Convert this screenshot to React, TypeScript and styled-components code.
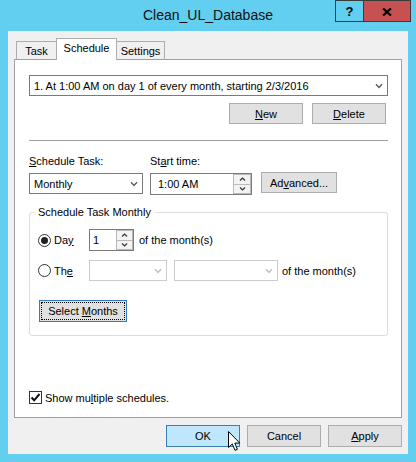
import React from "react";
import styled, { createGlobalStyle } from "styled-components";

const Global = createGlobalStyle`
  html, body { margin: 0; padding: 0; }
  body {
    width: 416px; height: 462px; overflow: hidden;
    font-family: "Liberation Sans", Arial, sans-serif;
    font-size: 11px; color: #000;
  }
  * { box-sizing: border-box; }
`;

const Window = styled.div`
  position: relative;
  width: 416px;
  height: 462px;
  background: #62cef0;
  display: flex;
  flex-direction: column;
`;

const TitleBar = styled.div`
  height: 31px;
  flex: 0 0 31px;
  display: grid;
  grid-template-columns: 1fr auto 1fr;
  align-items: start;
`;

const Title = styled.div`
  grid-column: 2;
  font-size: 14px;
  line-height: 31px;
  color: #111;
  white-space: nowrap;
`;

const CaptionButtons = styled.div`
  grid-column: 3;
  justify-self: end;
  display: flex;
  margin-right: 5px;
`;

const CaptionButton = styled.div<{ $w: number; $bg: string; $first?: boolean }>`
  width: ${(p) => p.$w}px;
  height: 22px;
  background: ${(p) => p.$bg};
  border: 1px solid #3a3a3a;
  border-left: ${(p) => (p.$first ? "1px solid #3a3a3a" : "none")};
  display: flex;
  align-items: center;
  justify-content: center;
  font-weight: bold;
  font-size: 13px;
  color: #000;
  padding-top: 1px;
`;

const Client = styled.div`
  flex: 1;
  margin: 0 8px 8px;
  background: #f0f0f0;
  padding: 7px 6px 7px 6px;
  display: flex;
  flex-direction: column;
`;

const TabRow = styled.div`
  height: 21px;
  flex: 0 0 21px;
  display: flex;
  align-items: flex-end;
  padding-left: 2px;
  position: relative;
  z-index: 1;
`;

const Tab = styled.div<{ $w: number; $active?: boolean; $overlap?: boolean }>`
  width: ${(p) => p.$w}px;
  height: ${(p) => (p.$active ? 22 : 18)}px;
  margin-bottom: ${(p) => (p.$active ? -1 : 0)}px;
  margin-left: ${(p) => (p.$overlap ? -1 : 0)}px;
  background: ${(p) => (p.$active ? "#fff" : "#f0f0f0")};
  border: 1px solid #adadad;
  border-bottom: none;
  position: relative;
  z-index: ${(p) => (p.$active ? 2 : 1)};
  display: flex;
  justify-content: center;
  align-items: center;
  padding-bottom: ${(p) => (p.$active ? 3 : 0)}px;
  line-height: 14px;
`;

const Panel = styled.div`
  flex: 0 0 359px;
  background: #fff;
  border: 1px solid #a0a0a0;
  padding: 15px 13px 13px 14px;
  display: flex;
  flex-direction: column;
`;

const ComboBox = styled.div<{ $w?: number; $h?: number; $disabled?: boolean }>`
  width: ${(p) => (p.$w ? `${p.$w}px` : "100%")};
  height: ${(p) => p.$h ?? 21}px;
  border: 1px solid ${(p) => (p.$disabled ? "#cccccc" : "#7a7a7a")};
  background: #fff;
  display: flex;
  align-items: center;
  justify-content: space-between;
  padding: 0 4px 0 4px;
  white-space: nowrap;
`;

const Chevron = ({ color = "#606060" }: { color?: string }) => (
  <svg width="8" height="6" viewBox="0 0 8 6" style={{ flex: "0 0 auto" }}>
    <path d="M1 1.2 L4 4.4 L7 1.2" fill="none" stroke={color} strokeWidth="1.5" />
  </svg>
);

const ButtonRow = styled.div<{ $gap: number; $mt: number; $pr?: number }>`
  display: flex;
  justify-content: flex-end;
  gap: ${(p) => p.$gap}px;
  margin-top: ${(p) => p.$mt}px;
  padding-right: ${(p) => p.$pr ?? 0}px;
`;

const Button = styled.div<{ $w: number; $h?: number; $variant?: "hover" | "focus" }>`
  width: ${(p) => p.$w}px;
  height: ${(p) => p.$h ?? 21}px;
  background: ${(p) => (p.$variant === "hover" ? "#bee6fd" : "#e1e1e1")};
  border: 1px solid
    ${(p) => (p.$variant === "hover" ? "#3c7fb1" : p.$variant === "focus" ? "#3178c6" : "#adadad")};
  display: flex;
  align-items: center;
  justify-content: center;
  position: relative;
  white-space: nowrap;
  padding: ${(p) => (p.$variant === "focus" ? "1px" : "0")};
`;

const FocusRing = styled.div`
  width: 100%;
  height: 100%;
  border: 1px dotted #000;
  display: flex;
  align-items: center;
  justify-content: center;
`;

const Key = styled.span`
  text-decoration: underline;
`;

const Separator = styled.div`
  height: 1px;
  background: #a0a0a0;
  margin-top: 16px;
`;

const ScheduleGrid = styled.div`
  display: grid;
  grid-template-columns: 114px 102px auto;
  column-gap: 7px;
  row-gap: 4px;
  margin-top: 12px;
  align-items: start;
`;

const FieldLabel = styled.div`
  line-height: 16px;
  white-space: nowrap;
`;

const Spinner = styled.div<{ $w: number; $h: number; $pl: number }>`
  width: ${(p) => p.$w}px;
  height: ${(p) => p.$h}px;
  border: 1px solid #7a7a7a;
  background: #fff;
  display: flex;
  align-items: stretch;
`;

const SpinText = styled.div<{ $pl: number }>`
  flex: 1;
  display: flex;
  align-items: center;
  padding-left: ${(p) => p.$pl}px;
`;

const SpinButtons = styled.div<{ $w: number }>`
  width: ${(p) => p.$w}px;
  display: flex;
  flex-direction: column;
`;

const SpinButton = styled.div`
  flex: 1;
  border: 1px solid #b9b9b9;
  background: #f4f4f4;
  display: flex;
  align-items: center;
  justify-content: center;
  & + & {
    border-top: none;
  }
`;

const Arrow = ({ up }: { up?: boolean }) => (
  <svg width="7" height="4" viewBox="0 0 7 4">
    <path
      d={up ? "M1 3.5 L3.5 1 L6 3.5" : "M1 0.5 L3.5 3 L6 0.5"}
      fill="none"
      stroke="#333"
      strokeWidth="1.2"
    />
  </svg>
);

const AdvancedButton = styled(Button)`
  margin-left: 2px;
  margin-top: -1px;
`;

const Group = styled.div`
  margin-top: 17px;
  border: 1px solid #dcdcdc;
  border-radius: 3px;
  padding: 0 8px 13px 8px;
  display: flex;
  flex-direction: column;
`;

const GroupTitle = styled.div`
  align-self: flex-start;
  margin: -9px 0 0 -4px;
  padding: 0 4px;
  background: #fff;
  line-height: 16px;
`;

const OptionRow = styled.div<{ $mt: number; $h: number }>`
  display: flex;
  align-items: center;
  height: ${(p) => p.$h}px;
  margin-top: ${(p) => p.$mt}px;
  white-space: nowrap;
`;

const RadioCell = styled.div`
  width: 51px;
  display: flex;
  align-items: center;
  gap: 3px;
`;

const Radio = styled.div<{ $checked?: boolean }>`
  width: 13px;
  height: 13px;
  border-radius: 50%;
  border: 1px solid #333;
  background: #fff;
  display: flex;
  align-items: center;
  justify-content: center;
  &::after {
    content: "";
    display: ${(p) => (p.$checked ? "block" : "none")};
    width: 7px;
    height: 7px;
    border-radius: 50%;
    background: #222;
  }
`;

const After = styled.span<{ $ml: number }>`
  margin-left: ${(p) => p.$ml}px;
`;

const SelectMonths = styled(Button)`
  margin-top: 19px;
  margin-left: 1px;
`;

const CheckRow = styled.div`
  margin-top: auto;
  display: flex;
  align-items: center;
  gap: 3px;
  height: 13px;
  white-space: nowrap;
`;

const CheckBox = styled.div`
  width: 13px;
  height: 13px;
  border: 1px solid #333;
  background: #fff;
  display: flex;
  align-items: center;
  justify-content: center;
`;

const Cursor = styled.svg`
  position: absolute;
  left: 228px;
  top: 431px;
`;

export default function App() {
  return (
    <>
      <Global />
      <Window>
        <TitleBar>
          <Title>Clean_UL_Database</Title>
          <CaptionButtons>
            <CaptionButton $w={29} $bg="#62cef0" $first>
              ?
            </CaptionButton>
            <CaptionButton $w={47} $bg="#c75050">
              <svg width="10" height="8" viewBox="0 0 10 8">
                <path d="M1 0.5 L9 7.5 M9 0.5 L1 7.5" stroke="#000" strokeWidth="2.2" />
              </svg>
            </CaptionButton>
          </CaptionButtons>
        </TitleBar>
        <Client>
          <TabRow>
            <Tab $w={41}>Task</Tab>
            <Tab $w={61} $active $overlap>
              Schedule
            </Tab>
            <Tab $w={49} $overlap>
              Settings
            </Tab>
          </TabRow>
          <Panel>
            <ComboBox>
              <span>1. At 1:00 AM on day 1 of every month, starting 2/3/2016</span>
              <Chevron />
            </ComboBox>
            <ButtonRow $gap={9} $mt={7} $pr={2}>
              <Button $w={74}>
                <Key>N</Key>ew
              </Button>
              <Button $w={74}>
                <Key>D</Key>elete
              </Button>
            </ButtonRow>
            <Separator />
            <ScheduleGrid>
              <FieldLabel>
                <Key>S</Key>chedule Task:
              </FieldLabel>
              <FieldLabel>
                St<Key>a</Key>rt time:
              </FieldLabel>
              <div />
              <ComboBox $w={114}>
                <span>Monthly</span>
                <Chevron />
              </ComboBox>
              <Spinner $w={102} $h={22} $pl={7}>
                <SpinText $pl={7}>1:00 AM</SpinText>
                <SpinButtons $w={18}>
                  <SpinButton>
                    <Arrow up />
                  </SpinButton>
                  <SpinButton>
                    <Arrow />
                  </SpinButton>
                </SpinButtons>
              </Spinner>
              <AdvancedButton $w={76}>
                Ad<Key>v</Key>anced...
              </AdvancedButton>
            </ScheduleGrid>
            <Group>
              <GroupTitle>Schedule Task Monthly</GroupTitle>
              <OptionRow $mt={9} $h={22}>
                <RadioCell>
                  <Radio $checked />
                  <span>
                    Da<Key>y</Key>
                  </span>
                </RadioCell>
                <Spinner $w={45} $h={22} $pl={3}>
                  <SpinText $pl={3}>1</SpinText>
                  <SpinButtons $w={17}>
                    <SpinButton>
                      <Arrow up />
                    </SpinButton>
                    <SpinButton>
                      <Arrow />
                    </SpinButton>
                  </SpinButtons>
                </Spinner>
                <After $ml={5}>of the month(s)</After>
              </OptionRow>
              <OptionRow $mt={9} $h={21}>
                <RadioCell>
                  <Radio />
                  <span>
                    Th<Key>e</Key>
                  </span>
                </RadioCell>
                <ComboBox $w={78} $disabled>
                  <span />
                  <Chevron color="#c0c0c0" />
                </ComboBox>
                <After $ml={7}>
                  <ComboBox $w={104} $disabled>
                    <span />
                    <Chevron color="#c0c0c0" />
                  </ComboBox>
                </After>
                <After $ml={4}>of the month(s)</After>
              </OptionRow>
              <SelectMonths $w={88} $h={22} $variant="focus">
                <FocusRing>
                  Select&nbsp;<Key>M</Key>onths
                </FocusRing>
              </SelectMonths>
            </Group>
            <CheckRow>
              <CheckBox>
                <svg width="11" height="11" viewBox="0 0 11 11">
                  <path d="M1.5 5.5 L4.2 8.3 L9.5 2" fill="none" stroke="#111" strokeWidth="2" />
                </svg>
              </CheckBox>
              <span>
                Show mu<Key>l</Key>tiple schedules.
              </span>
            </CheckRow>
          </Panel>
          <ButtonRow $gap={7} $mt={7}>
            <Button $w={74} $h={22} $variant="hover">
              OK
            </Button>
            <Button $w={74} $h={22}>
              Cancel
            </Button>
            <Button $w={74} $h={22}>
              <Key>A</Key>pply
            </Button>
          </ButtonRow>
        </Client>
        <Cursor width="13" height="21" viewBox="0 0 13 21">
          <path
            d="M0.5 0.5 L0.5 16.5 L4.3 12.9 L7 19.3 L9.4 18.3 L6.8 12.1 L11.8 12.1 Z"
            fill="#fff"
            stroke="#000"
            strokeWidth="1"
            strokeLinejoin="miter"
          />
        </Cursor>
      </Window>
    </>
  );
}
